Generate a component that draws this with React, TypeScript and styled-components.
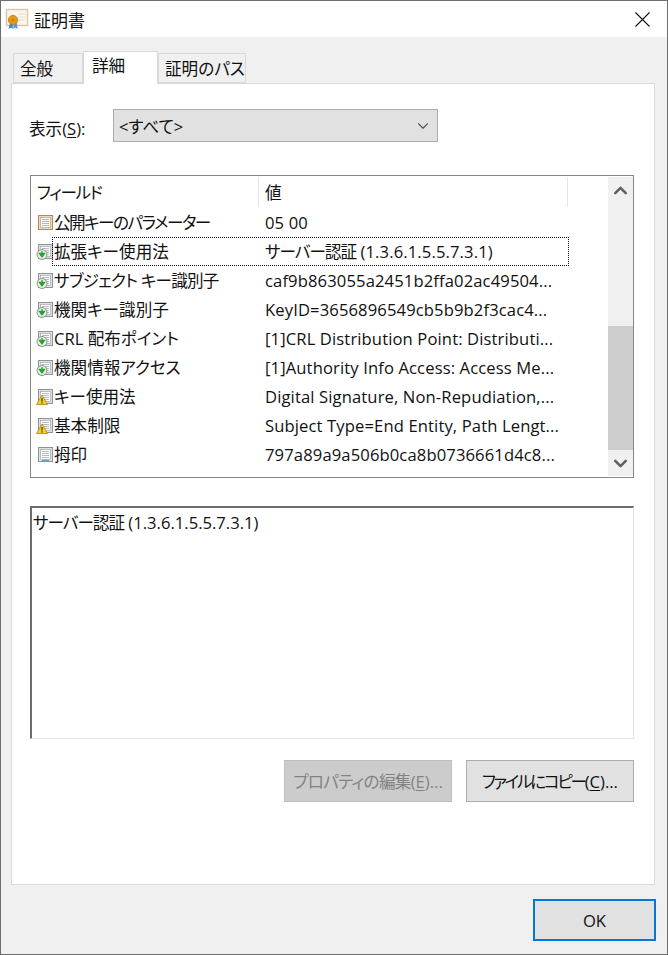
import React from "react";
import styled, { createGlobalStyle } from "styled-components";
import { ChevronDown, ChevronUp } from "lucide-react";

const GlobalStyle = createGlobalStyle`
  html, body {
    margin: 0;
    padding: 0;
    background: #ffffff;
  }
  * {
    box-sizing: border-box;
  }
`;

const fontStack = `"Open Sans", "Noto Sans CJK JP", sans-serif`;

const Window = styled.div`
  width: 668px;
  height: 955px;
  display: flex;
  flex-direction: column;
  border: 1px solid #6d6d6d;
  background: #f0f0f0;
  color: #111;
  font-family: ${fontStack};
  font-size: 16.6px;
  font-feature-settings: "palt";
  overflow: hidden;
`;

const TitleBar = styled.div`
  height: 36px;
  flex: none;
  display: flex;
  align-items: center;
  padding-left: 4px;
  gap: 5px;
  background: #ffffff;
  font-size: 17px;
`;

const CloseIcon = styled.svg`
  margin-left: auto;
  margin-right: 17px;
  width: 15px;
  height: 15px;
  flex: none;
`;

const Body = styled.div`
  flex: 1;
  display: flex;
  flex-direction: column;
  padding: 13px 12px 0 10px;
`;

const TabStrip = styled.div`
  height: 33px;
  flex: none;
  display: flex;
  align-items: flex-end;
  padding-left: 2px;
  position: relative;
  z-index: 1;
`;

const Tab = styled.div<{ $active?: boolean; $width: number }>`
  width: ${(p) => p.$width}px;
  height: ${(p) => (p.$active ? 33 : 30)}px;
  margin-bottom: ${(p) => (p.$active ? -1 : 0)}px;
  padding: ${(p) => (p.$active ? "0 0 0 8px" : "1px 0 0 6px")};
  background: ${(p) => (p.$active ? "#ffffff" : "#f0f0f0")};
  border: 1px solid #d9d9d9;
  border-bottom: ${(p) => (p.$active ? "none" : "1px solid #d9d9d9")};
  white-space: nowrap;
  line-height: 27px;
`;

const Panel = styled.div`
  width: 644px;
  height: 802px;
  flex: none;
  display: flex;
  flex-direction: column;
  padding: 25px 19px 0 18px;
  background: #ffffff;
  border: 1px solid #d9d9d9;
`;

const FilterRow = styled.div`
  height: 33px;
  flex: none;
  display: flex;
  align-items: center;
`;

const FilterLabel = styled.div`
  width: 84px;
  padding-top: 5px;
  margin-left: -1px;
  white-space: nowrap;
`;

const Underlined = styled.span`
  text-decoration: underline;
  text-underline-offset: 2px;
  text-decoration-thickness: 1px;
`;

// kana in the original UI font is much narrower than in Noto
const Tight = styled.span<{ $by: number }>`
  letter-spacing: ${(p) => p.$by}px;
`;

const Select = styled.div`
  width: 325px;
  height: 33px;
  display: flex;
  align-items: center;
  justify-content: space-between;
  padding: 0 5px 0 5px;
  background: #e1e1e1;
  border: 1px solid #adadad;
  color: #555;

  span {
    color: #111;
  }
`;

const FieldList = styled.div`
  width: 604px;
  height: 303px;
  flex: none;
  margin-top: 33px;
  display: flex;
  background: #ffffff;
  border: 1px solid #828790;
`;

const ListArea = styled.div`
  flex: 1;
  min-width: 0;
  display: flex;
  flex-direction: column;
`;

const HeaderRow = styled.div`
  height: 32px;
  flex: none;
  display: flex;
  padding-top: 1px;
`;

const HeaderCell = styled.div<{ $width: number }>`
  width: ${(p) => p.$width}px;
  height: 30px;
  padding-left: 6px;
  line-height: 31px;
  border-right: 1px solid #e5e5e5;
  white-space: nowrap;
`;

const Row = styled.div`
  height: 29px;
  flex: none;
  display: flex;
  align-items: center;
  padding-left: 5px;
  line-height: 29px;
  white-space: nowrap;
`;

const RowName = styled.div`
  width: 206px;
  flex: none;
  padding-left: 2px;
`;

const RowValue = styled.div`
  padding-left: 7px;
  letter-spacing: 0.12px;
`;

const FocusRing = styled.div`
  width: 517px;
  height: 29px;
  display: flex;
  align-items: center;
  outline: 1px dotted #111;
  outline-offset: -1px;
`;

const IconBox = styled.svg`
  width: 17px;
  height: 17px;
  flex: none;
  margin-right: -1px;
`;

const Scrollbar = styled.div`
  width: 25px;
  flex: none;
  display: flex;
  flex-direction: column;
  align-items: center;
  margin: 1px 0;
  background: #f0f0f0;
  color: #606060;
`;

const ScrollArrow = styled.div`
  height: 26px;
  flex: none;
  display: flex;
  align-items: center;
  justify-content: center;
`;

const ScrollTrack = styled.div`
  flex: 1;
  width: 100%;
  display: flex;
  flex-direction: column;
  justify-content: flex-end;
`;

const ScrollThumb = styled.div`
  height: 124px;
  background: #cdcdcd;
`;

const DetailBox = styled.div`
  width: 604px;
  height: 233px;
  flex: none;
  margin-top: 28px;
  padding: 2px 1px;
  background: #ffffff;
  border-top: 2px solid #6d6d6d;
  border-left: 2px solid #6d6d6d;
  border-right: 1px solid #e3e3e3;
  border-bottom: 1px solid #e3e3e3;
  line-height: 26px;
`;

const ButtonRow = styled.div`
  display: flex;
  justify-content: flex-end;
  gap: 14px;
  width: 604px;
  margin-top: 21px;
`;

const Button = styled.div<{ $disabled?: boolean }>`
  width: 168px;
  height: 42px;
  display: flex;
  align-items: center;
  justify-content: center;
  white-space: nowrap;
  background: ${(p) => (p.$disabled ? "#cccccc" : "#e1e1e1")};
  border: 1px solid ${(p) => (p.$disabled ? "#bfbfbf" : "#adadad")};
  color: ${(p) => (p.$disabled ? "#838383" : "#111")};
`;

const Footer = styled.div`
  flex: 1;
  display: flex;
  justify-content: flex-end;
  align-items: flex-start;
  padding-top: 14px;
  margin-right: -1px;
`;

const OkButton = styled.div`
  width: 123px;
  height: 42px;
  display: flex;
  align-items: center;
  justify-content: center;
  background: #e1e1e1;
  border: 2px solid #0078d7;
`;

type Kind = "plain" | "orange" | "down" | "warn";

function RowIcon({ kind }: { kind: Kind }) {
  const orange = kind === "orange";
  const edge = orange ? "#b5895e" : "#8f9398";
  const band = orange ? "#f0d9bf" : "#dfe3e7";
  const line = orange ? "#d09a62" : "#a2a8ae";
  return (
    <IconBox viewBox="0 0 17 17">
      <rect x="2.5" y="1.5" width="14" height="14" fill={band} stroke={edge} />
      <rect x="4.5" y="3.5" width="10" height="10" fill="#ffffff" stroke={line} strokeWidth="0.7" />
      <path d="M6 5.5h7M6 7.5h7M6 9.5h7M6 11.5h7" stroke={line} strokeWidth="0.8" />
      {kind === "plain" && <path d="M6 14.5h7" stroke="#45a5dc" strokeWidth="1.2" />}
      {kind === "down" && (
        <>
          <circle cx="6" cy="11.5" r="5" fill="#e6f2e2" stroke="#8a9088" />
          <path d="M6 8v4M3.5 10.5L6 14l2.5-3.5z" fill="#2f9e38" stroke="#2f9e38" strokeWidth="1.3" />
        </>
      )}
      {kind === "warn" && (
        <>
          <path d="M6 7L11.5 16.5H0.5z" fill="#f6d021" stroke="#a98a10" strokeWidth="0.8" />
          <path d="M6 10v3.4M6 14.2v1.2" stroke="#222" strokeWidth="1.1" />
        </>
      )}
    </IconBox>
  );
}

function CertificateIcon() {
  return (
    <svg width="24" height="24" viewBox="0 0 24 24">
      <rect x="1.5" y="2.5" width="21" height="16" fill="#fbf5ea" stroke="#dcc6a6" strokeWidth="1.4" />
      <path d="M13 7h7M13 10h7M13 13h7" stroke="#e2e2e2" strokeWidth="1.2" />
      <path d="M5 16l-1.5 6 2.5-1.5L7.5 22 8 16z" fill="#3f7fd6" />
      <path d="M9 16l-1 6 2.5-1.5L12.5 22 12 16z" fill="#5b96e6" />
      <circle cx="8" cy="13" r="4.6" fill="#e39a18" stroke="#b97a10" strokeWidth="0.8" />
      <circle cx="8" cy="13" r="1.6" fill="#c98412" />
    </svg>
  );
}

const serverAuth = <Tight $by={-1}>サーバー認証</Tight>;

const rows: { kind: Kind; name: React.ReactNode; value: React.ReactNode; focused?: boolean }[] = [
  { kind: "orange", name: <Tight $by={-1.5}>公開キーのパラメーター</Tight>, value: "05 00" },
  { kind: "down", name: "拡張キー使用法", value: <>{serverAuth} (1.3.6.1.5.5.7.3.1)</>, focused: true },
  { kind: "down", name: <Tight $by={-0.75}>サブジェクト キー識別子</Tight>, value: "caf9b863055a2451b2ffa02ac49504..." },
  { kind: "down", name: "機関キー識別子", value: "KeyID=3656896549cb5b9b2f3cac4..." },
  { kind: "down", name: "CRL 配布ポイント", value: "[1]CRL Distribution Point: Distributi..." },
  { kind: "down", name: "機関情報アクセス", value: "[1]Authority Info Access: Access Me..." },
  { kind: "warn", name: "キー使用法", value: "Digital Signature, Non-Repudiation,..." },
  { kind: "warn", name: "基本制限", value: "Subject Type=End Entity, Path Lengt..." },
  { kind: "plain", name: "拇印", value: "797a89a9a506b0ca8b0736661d4c8..." },
];

export default function App() {
  return (
    <>
      <GlobalStyle />
      <Window>
        <TitleBar>
          <CertificateIcon />
          証明書
          <CloseIcon viewBox="0 0 15 15">
            <path d="M0.5 0.5L14.5 14.5M14.5 0.5L0.5 14.5" stroke="#111" strokeWidth="1.1" fill="none" />
          </CloseIcon>
        </TitleBar>
        <Body>
          <TabStrip>
            <Tab $width={70}>全般</Tab>
            <Tab $active $width={75}>詳細</Tab>
            <Tab $width={88}>証明のパス</Tab>
          </TabStrip>
          <Panel>
            <FilterRow>
              <FilterLabel>
                表示(<Underlined>S</Underlined>):
              </FilterLabel>
              <Select>
                <span>&lt;すべて&gt;</span>
                <ChevronDown size={18} strokeWidth={1.5} />
              </Select>
            </FilterRow>
            <FieldList>
              <ListArea>
                <HeaderRow>
                  <HeaderCell $width={228}>
                    <Tight $by={-1.4}>フィールド</Tight>
                  </HeaderCell>
                  <HeaderCell $width={309}>値</HeaderCell>
                </HeaderRow>
                {rows.map((row, i) =>
                  row.focused ? (
                    <Row key={i}>
                      <RowIcon kind={row.kind} />
                      <FocusRing>
                        <RowName>{row.name}</RowName>
                        <RowValue>{row.value}</RowValue>
                      </FocusRing>
                    </Row>
                  ) : (
                    <Row key={i}>
                      <RowIcon kind={row.kind} />
                      <RowName>{row.name}</RowName>
                      <RowValue>{row.value}</RowValue>
                    </Row>
                  ),
                )}
              </ListArea>
              <Scrollbar>
                <ScrollArrow>
                  <ChevronUp size={21} strokeWidth={3} />
                </ScrollArrow>
                <ScrollTrack>
                  <ScrollThumb />
                </ScrollTrack>
                <ScrollArrow>
                  <ChevronDown size={21} strokeWidth={3} />
                </ScrollArrow>
              </Scrollbar>
            </FieldList>
            <DetailBox>{serverAuth} (1.3.6.1.5.5.7.3.1)</DetailBox>
            <ButtonRow>
              <Button $disabled>
                <Tight $by={-0.7}>プロパティの編集</Tight>(<Underlined>E</Underlined>)...
              </Button>
              <Button>
                <Tight $by={-2.3}>ファイルにコピー</Tight>(<Underlined>C</Underlined>)...
              </Button>
            </ButtonRow>
          </Panel>
          <Footer>
            <OkButton>OK</OkButton>
          </Footer>
        </Body>
      </Window>
    </>
  );
}
